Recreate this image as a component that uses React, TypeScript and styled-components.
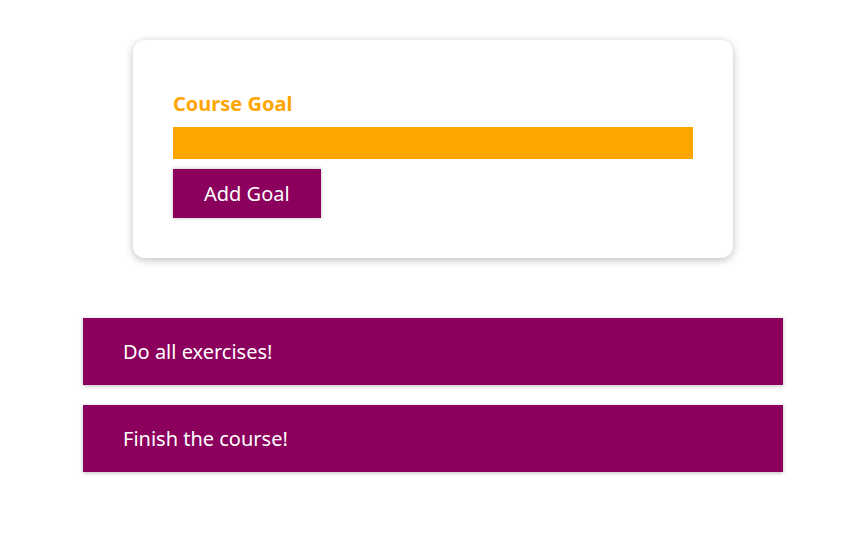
import styled, { createGlobalStyle } from 'styled-components'

const GlobalStyle = createGlobalStyle`
	* {
		box-sizing: border-box;
	}

	html {
		font-family: 'Noto Sans', 'Noto Sans CJK KR', sans-serif;
		font-size: 20px;
	}

	body {
		margin: 0;
		padding-left: 14px;
		background: #ffffff;
	}
`

const GoalForm = styled.form`
	width: 600px;
	max-width: 90%;
	margin: 40px auto;
	padding: 40px;
	background: #ffffff;
	border-radius: 12px;
	box-shadow: 0 2px 8px rgba(0, 0, 0, 0.26);
`

const FormControl = styled.div`
	margin: 10px 0;
`

const Label = styled.label`
	display: block;
	margin-bottom: 10px;
	color: #ffa500;
	font-weight: bold;
	line-height: 27px;
`

const Input = styled.input`
	display: block;
	width: 100%;
	border: 1px solid #ffa500;
	background: #ffa500;
	font: inherit;
	line-height: 30px;
	height: 32px;
	padding: 0 5px;
	outline: none;
`

const Button = styled.button`
	font: inherit;
	line-height: 27px;
	padding: 10px 30px;
	border: 1px solid #8b005d;
	color: #ffffff;
	background: #8b005d;
	box-shadow: 0 0 4px rgba(0, 0, 0, 0.26);
	cursor: pointer;
`

const Goals = styled.section`
	width: 700px;
	max-width: 90%;
	margin: 60px auto;
`

const GoalList = styled.ul`
	list-style: none;
	margin: 0;
	padding: 0;
`

const GoalItem = styled.li`
	margin: 20px 0;
	padding: 20px 40px;
	line-height: 27px;
	background: #8b005d;
	color: #ffffff;
	box-shadow: 0 1px 4px rgba(0, 0, 0, 0.26);
	cursor: pointer;
`

const goals = [
	{ id: 'g1', text: 'Do all exercises!' },
	{ id: 'g2', text: 'Finish the course!' },
]

const App = (): JSX.Element => {
	return (
		<>
			<GlobalStyle />
			<GoalForm onSubmit={(event) => event.preventDefault()}>
				<FormControl>
					<Label htmlFor="goal">Course Goal</Label>
					<Input id="goal" type="text" />
				</FormControl>
				<Button type="submit">Add Goal</Button>
			</GoalForm>
			<Goals>
				<GoalList>
					{goals.map(({ id, text }) => (
						<GoalItem key={id}>{text}</GoalItem>
					))}
				</GoalList>
			</Goals>
		</>
	)
}

export default App
